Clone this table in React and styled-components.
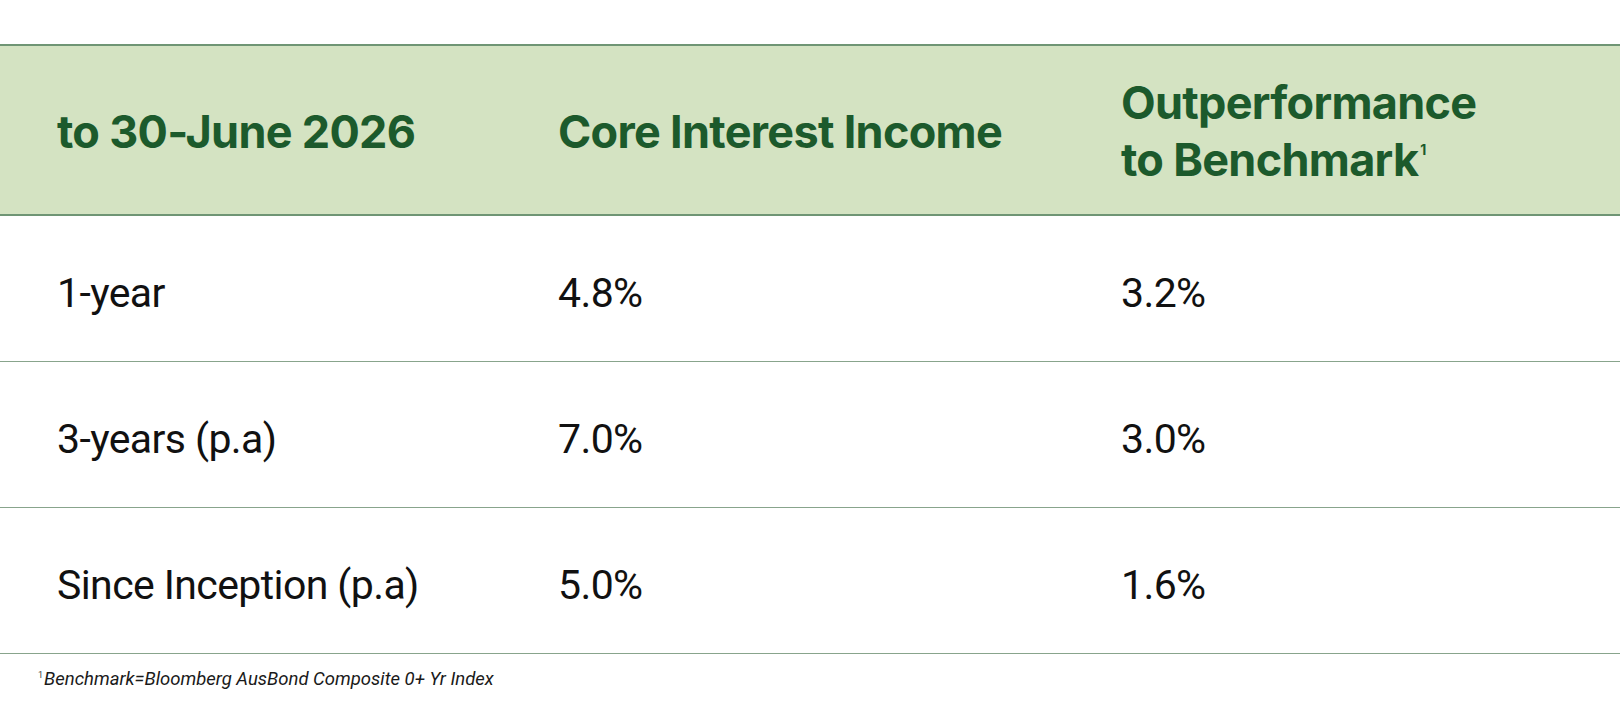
import React from "react";
import styled, { createGlobalStyle } from "styled-components";

const Global = createGlobalStyle`
  html, body { margin: 0; padding: 0; background: #ffffff; }
  body { font-family: Roboto, "Liberation Sans", sans-serif; }
`;

const Page = styled.div`
  width: 1620px;
  padding-top: 44px;
`;

const Table = styled.table`
  width: 100%;
  border-collapse: collapse;
  table-layout: fixed;
`;

const Col = styled.col`
  width: ${(p) => p.$w};
`;

const HeadRow = styled.tr`
  height: 170px;
  background: #d4e3c2;
  border-top: 2px solid #6f9574;
  border-bottom: 2px solid #6f9574;
`;

const HeadCell = styled.th`
  text-align: left;
  vertical-align: middle;
  padding: 2px 20px 0 57px;
  font-family: Inter, "Liberation Sans", sans-serif;
  font-weight: 700;
  font-size: 45px;
  line-height: 57px;
  letter-spacing: -0.7px;
  color: #1c5a2c;
`;

const Sup = styled.sup`
  font-size: 14px;
  line-height: 1;
  vertical-align: top;
  position: relative;
  top: 12px;
  margin-left: 2px;
  letter-spacing: 0;
`;

const BodyRow = styled.tr`
  height: 146px;
  border-bottom: 1.5px solid #88a48c;
`;

const Cell = styled.td`
  vertical-align: middle;
  padding: 10px 20px 0 57px;
  font-family: Roboto, "Liberation Sans", sans-serif;
  font-weight: 400;
  font-size: 41px;
  letter-spacing: -0.6px;
  color: #111111;
`;

const Footnote = styled.p`
  margin: 14px 0 0 38px;
  font-family: Roboto, "Liberation Sans", sans-serif;
  font-style: italic;
  font-size: 18.5px;
  color: #1a1a1a;
`;

const FootSup = styled.span`
  font-style: normal;
  font-size: 9px;
  line-height: 1;
  vertical-align: top;
  position: relative;
  top: 3px;
  margin-right: 1px;
  color: #444;
`;

const rows = [
  ["1-year", "4.8%", "3.2%"],
  ["3-years (p.a)", "7.0%", "3.0%"],
  ["Since Inception (p.a)", "5.0%", "1.6%"],
];

export default function App() {
  return (
    <Page>
      <Global />
      <Table>
        <colgroup>
          <Col $w="501px" />
          <Col $w="563px" />
          <Col $w="auto" />
        </colgroup>
        <thead>
          <HeadRow>
            <HeadCell>to 30-June 2026</HeadCell>
            <HeadCell>Core Interest Income</HeadCell>
            <HeadCell>
              Outperformance
              <br />
              to Benchmark<Sup>1</Sup>
            </HeadCell>
          </HeadRow>
        </thead>
        <tbody>
          {rows.map((r) => (
            <BodyRow key={r[0]}>
              {r.map((c, i) => (
                <Cell key={i}>{c}</Cell>
              ))}
            </BodyRow>
          ))}
        </tbody>
      </Table>
      <Footnote>
        <FootSup>1</FootSup>Benchmark=Bloomberg AusBond Composite 0+ Yr Index
      </Footnote>
    </Page>
  );
}
